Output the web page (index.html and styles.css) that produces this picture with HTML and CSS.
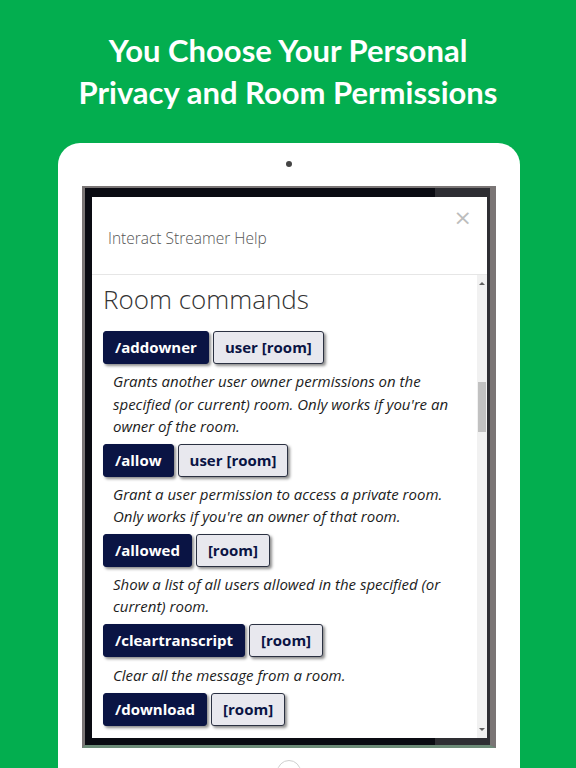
FILE: index.html
```html
<!DOCTYPE html>
<html lang="en">
<head>
<meta charset="utf-8">
<title>Interact Streamer Help</title>
<link rel="stylesheet" href="styles.css">
</head>
<body>
<div class="page">
  <h1 class="headline">You Choose Your Personal<br>Privacy and Room Permissions</h1>
  <div class="tablet">
    <div class="camera"></div>
    <div class="screen">
      <div class="dialog">
        <div class="dialog-header">
          <div class="dialog-title">Interact Streamer Help</div>
          <div class="dialog-close">×</div>
        </div>
        <div class="dialog-body">
          <div class="content">
            <h2 class="section-title">Room commands</h2>
            <div class="cmd-row"><span class="cmd">/addowner</span><span class="arg">user [room]</span></div>
            <p class="desc">Grants another user owner permissions on the specified (or current) room. Only works if you're an owner of the room.</p>
            <div class="cmd-row"><span class="cmd">/allow</span><span class="arg">user [room]</span></div>
            <p class="desc">Grant a user permission to access a private room. Only works if you're an owner of that room.</p>
            <div class="cmd-row"><span class="cmd">/allowed</span><span class="arg">[room]</span></div>
            <p class="desc">Show a list of all users allowed in the specified (or current) room.</p>
            <div class="cmd-row"><span class="cmd">/cleartranscript</span><span class="arg">[room]</span></div>
            <p class="desc desc-single">Clear all the message from a room.</p>
            <div class="cmd-row"><span class="cmd">/download</span><span class="arg">[room]</span></div>
          </div>
          <div class="scrollbar">
            <div class="sb-arrow sb-up"></div>
            <div class="sb-thumb"></div>
            <div class="sb-fill"></div>
            <div class="sb-arrow sb-down"></div>
          </div>
        </div>
      </div>
    </div>
    <div class="home"></div>
  </div>
</div>
</body>
</html>
```
FILE: styles.css
```css
html, body {
  margin: 0;
  padding: 0;
}
body {
  background: #03ae4f;
  width: 576px;
  height: 768px;
  overflow: hidden;
}
.page {
  width: 576px;
  height: 768px;
  overflow: hidden;
}
.headline {
  margin: 0;
  padding-top: 29px;
  height: 114px;
  box-sizing: border-box;
  text-align: center;
  color: #ffffff;
  font-family: "Lato", "Open Sans", sans-serif;
  font-weight: 700;
  font-size: 31px;
  line-height: 42px;
  letter-spacing: 0;
}
.tablet {
  margin: 29px 56px 0 58px;
  background: #ffffff;
  border-radius: 22px 22px 0 0;
  padding: 18px 24px 0 24px;
  height: 640px;
}
.camera {
  width: 6px;
  height: 6px;
  border-radius: 50%;
  background: #444;
  margin: 0 auto 19px;
}
.screen {
  height: 562px;
  box-sizing: border-box;
  border-style: solid;
  border-color: #7a7575;
  border-width: 2px 6px 3px 3px;
  border-bottom-color: #6d8c78;
  padding: 9px 3px 7px 7px;
  background: linear-gradient(to right, #0a0b12 0, #0a0b12 350px, #2e2e33 350px);
}
.dialog {
  height: 100%;
  background: #ffffff;
  display: flex;
  flex-direction: column;
}
.dialog-header {
  height: 78px;
  flex: none;
  box-sizing: border-box;
  border-bottom: 1px solid #e6e6e6;
  display: flex;
  justify-content: space-between;
  align-items: flex-start;
  padding: 0 15px 0 16px;
}
.dialog-title {
  padding-top: 31px;
  font-family: "Open Sans", sans-serif;
  font-weight: 300;
  font-size: 15.5px;
  line-height: 20px;
  color: #555;
}
.dialog-close {
  padding-top: 9px;
  font-family: "DejaVu Sans", sans-serif;
  font-size: 22px;
  line-height: 24px;
  color: #bdbdbd;
}
.dialog-body {
  flex: 1;
  display: flex;
  min-height: 0;
}
.content {
  flex: 1;
  overflow: hidden;
  padding-left: 11px;
  padding-right: 8px;
}
.section-title {
  margin: 7px 0 15px;
  font-family: "Open Sans", sans-serif;
  font-weight: 300;
  font-size: 26px;
  line-height: 34px;
  color: #333;
}
.cmd-row {
  display: flex;
  gap: 4px;
}
.cmd, .arg {
  height: 33px;
  box-sizing: border-box;
  padding: 0 11px;
  font-family: "Open Sans", sans-serif;
  font-weight: 700;
  font-size: 15px;
  line-height: 30px;
  border-radius: 3px;
  box-shadow: 2px 2px 3px rgba(0, 0, 0, 0.45);
}
.cmd {
  background: #0a1444;
  color: #ffffff;
  border: 1px solid #0a1444;
}
.arg {
  background: #e8e8ee;
  color: #0a1444;
  border: 1.5px solid #2b3142;
  padding: 0 11px;
}
.desc {
  margin: 6px 0 6px;
  padding-left: 10px;
  font-family: "Open Sans", sans-serif;
  font-style: italic;
  font-size: 15px;
  line-height: 22.5px;
  color: #1c1c1c;
}
.desc-single {
  margin-top: 7px;
  margin-bottom: 7px;
}
.scrollbar {
  width: 10px;
  flex: none;
  background: #f1f1f1;
  display: flex;
  flex-direction: column;
}
.sb-arrow {
  height: 17px;
  flex: none;
  position: relative;
}
.sb-up::after, .sb-down::after {
  content: "";
  position: absolute;
  left: 2px;
  border-left: 3px solid transparent;
  border-right: 3px solid transparent;
}
.sb-up::after {
  top: 7px;
  border-bottom: 3px solid #606060;
}
.sb-down::after {
  top: 7px;
  border-top: 3px solid #606060;
}
.sb-thumb {
  margin: 90px 1px 0;
  height: 50px;
  background: #c1c1c1;
  flex: none;
}
.sb-fill {
  flex: 1;
}
.home {
  width: 24px;
  height: 24px;
  box-sizing: border-box;
  border: 1.5px solid #cfcfcf;
  border-radius: 50%;
  margin: 12px auto 0;
}
```
